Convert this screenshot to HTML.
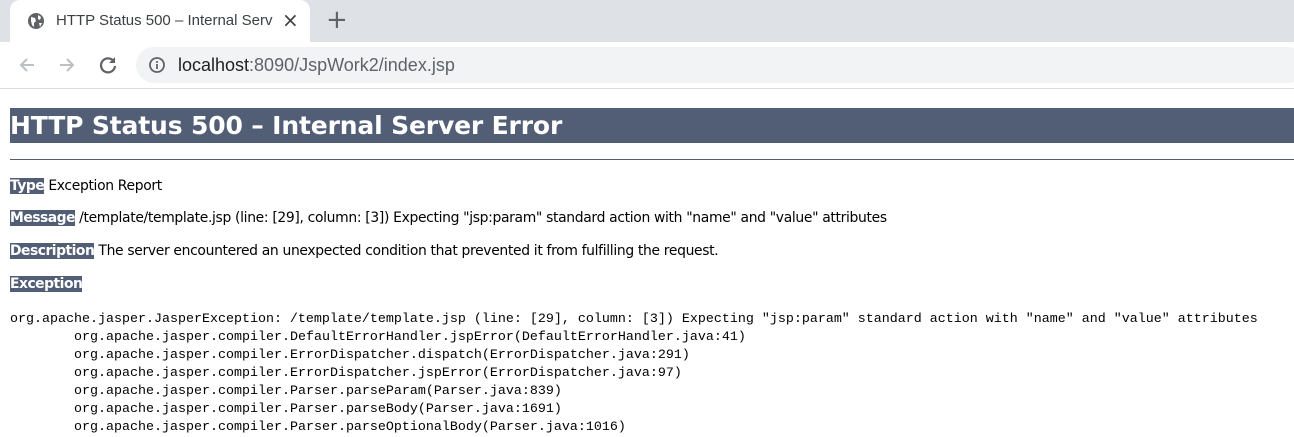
<!DOCTYPE html>
<html><head><meta charset="utf-8"><style>
*{margin:0;padding:0;box-sizing:border-box}
body{width:1294px;height:437px;overflow:hidden;background:#fff;font-family:"DejaVu Sans","Liberation Sans",sans-serif;position:relative}
.tabbar{position:absolute;left:0;top:0;width:1294px;height:42px;background:#dee1e6}
.tab{position:absolute;left:10px;top:0;width:300px;height:42px;background:#fff;border-radius:10px 10px 0 0}
.tabtitle{position:absolute;left:46px;top:12px;font-size:15px;color:#3c4043;font-family:"Liberation Sans",sans-serif;white-space:nowrap;width:222px;overflow:hidden}
.tb{position:absolute;left:0;top:42px;width:1294px;height:47px;background:#fff;border-bottom:1px solid #dadce0}
.url{position:absolute;left:136px;top:5px;width:1170px;height:36px;background:#f1f3f4;border-radius:18px}
.urltext{position:absolute;left:42px;top:8px;font-size:18px;color:#202124;font-family:"Liberation Sans",sans-serif}
.urltext span{color:#5f6368}
h1{position:absolute;left:10px;top:108px;width:1284px;height:35px;background:#525d76;color:#fff;font-family:"DejaVu Sans",sans-serif;font-weight:bold;font-size:25px;line-height:36px;letter-spacing:-0.15px}
.hr{position:absolute;left:10px;top:159px;width:1284px;height:1px;background:#525d76}
.p{position:absolute;left:10px;font-size:13.9px;color:#000;white-space:nowrap;letter-spacing:-0.33px}
.p b{background:#525d76;color:#fff;letter-spacing:-0.5px}
pre{position:absolute;left:10px;top:311px;font-family:"Liberation Mono",monospace;font-size:13.33px;line-height:18px;color:#000;tab-size:8}
</style></head><body>
<div class="tabbar"><div class="tab">
<svg style="position:absolute;left:17px;top:12px" width="18" height="18" viewBox="0 0 18 18"><circle cx="9" cy="9" r="8" fill="#5f6368"/><path d="M4 5 L8 6 L9 9 L7 11 L7 15 L5 13 L4 9Z M11 3 L14 5 L13 8 L11 7Z M12 11 L15 11 L13 15Z" fill="#fff"/></svg>
<div class="tabtitle">HTTP Status 500 – Internal Serv</div>
<div style="position:absolute;left:272px;top:8px;font-size:20px;color:#3c4043;font-family:'DejaVu Sans'">×</div>
</div>
<div style="position:absolute;left:326px;top:5px;font-size:26px;color:#5f6368;font-family:'DejaVu Sans'">+</div>
</div>
<div class="tb">
<svg style="position:absolute;left:16px;top:12px" width="22" height="22" viewBox="0 0 22 22"><path d="M18 11H5M11 5L5 11L11 17" stroke="#bcc0c4" stroke-width="2" fill="none"/></svg>
<svg style="position:absolute;left:56px;top:12px" width="22" height="22" viewBox="0 0 22 22"><path d="M4 11H17M11 5L17 11L11 17" stroke="#bcc0c4" stroke-width="2" fill="none"/></svg>
<svg style="position:absolute;left:97px;top:12px" width="22" height="22" viewBox="0 0 22 22"><path d="M16.5 7A7 7 0 1 0 18 12" stroke="#5f6368" stroke-width="2.2" fill="none"/><path d="M18 3V9H12Z" fill="#5f6368"/></svg>
<div class="url">
<svg style="position:absolute;left:12px;top:9px" width="18" height="18" viewBox="0 0 18 18"><circle cx="9" cy="9" r="7" stroke="#5f6368" stroke-width="1.8" fill="none"/><rect x="8.1" y="8" width="1.8" height="5" fill="#5f6368"/><rect x="8.1" y="5" width="1.8" height="1.8" fill="#5f6368"/></svg>
<div class="urltext">localhost<span>:8090/JspWork2/index.jsp</span></div>
</div></div>
<h1>HTTP Status 500 – Internal Server Error</h1>
<div class="hr"></div>
<div class="p" style="top:178px"><b>Type</b> Exception Report</div>
<div class="p" style="top:210px"><b>Message</b> /template/template.jsp (line: [29], column: [3]) Expecting "jsp:param" standard action with "name" and "value" attributes</div>
<div class="p" style="top:243px"><b>Description</b> The server encountered an unexpected condition that prevented it from fulfilling the request.</div>
<div class="p" style="top:276px"><b>Exception</b></div>
<pre>org.apache.jasper.JasperException: /template/template.jsp (line: [29], column: [3]) Expecting "jsp:param" standard action with "name" and "value" attributes
	org.apache.jasper.compiler.DefaultErrorHandler.jspError(DefaultErrorHandler.java:41)
	org.apache.jasper.compiler.ErrorDispatcher.dispatch(ErrorDispatcher.java:291)
	org.apache.jasper.compiler.ErrorDispatcher.jspError(ErrorDispatcher.java:97)
	org.apache.jasper.compiler.Parser.parseParam(Parser.java:839)
	org.apache.jasper.compiler.Parser.parseBody(Parser.java:1691)
	org.apache.jasper.compiler.Parser.parseOptionalBody(Parser.java:1016)</pre>
</body></html>
